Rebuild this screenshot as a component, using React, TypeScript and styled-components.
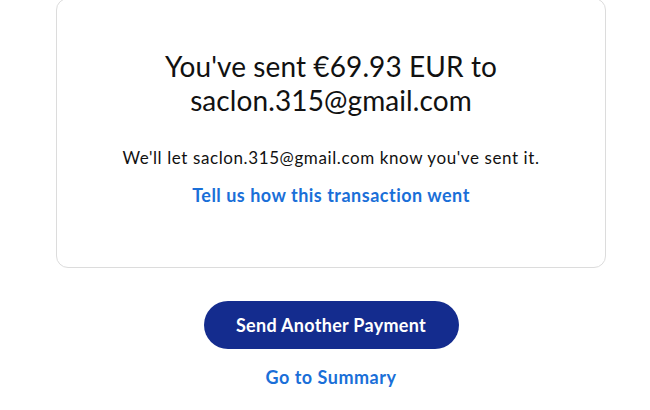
import React from "react";
import styled, { createGlobalStyle } from "styled-components";

const Global = createGlobalStyle`
  html, body { margin: 0; padding: 0; background: #ffffff; }
  body { font-family: Lato, "Open Sans", sans-serif; color: #001435; }
`;

const Page = styled.main`
  width: 650px;
  display: flex;
  flex-direction: column;
  align-items: center;
`;

const Card = styled.section`
  box-sizing: border-box;
  width: 550px;
  height: 270px;
  margin: -2px 0 0 12px;
  border: 1px solid #dcdcdc;
  border-radius: 12px;
  padding: 51px 40px 0;
  display: flex;
  flex-direction: column;
  align-items: center;
  text-align: center;
`;

const Heading = styled.h1`
  margin: 0;
  font-size: 28px;
  line-height: 33.5px;
  font-weight: 400;
  color: #111111;
  width: 380px;
  letter-spacing: 0.1px;
`;

const Sub = styled.p`
  margin: 30px 0 0;
  font-size: 17px;
  line-height: 22px;
  letter-spacing: 0.6px;
  color: #111111;
`;

const Link = styled.a<{ $top: number; $left?: number }>`
  margin-top: ${(p) => p.$top}px;
  margin-left: ${(p) => p.$left ?? 0}px;
  font-size: 18px;
  line-height: 22px;
  font-weight: 700;
  letter-spacing: 0.5px;
  color: #1a6fd8;
  text-decoration: none;
  cursor: pointer;
`;

const Button = styled.button`
  margin: 33px 0 0 12px;
  width: 255px;
  height: 48px;
  border: none;
  border-radius: 24px;
  background: #142c8e;
  color: #ffffff;
  font-family: inherit;
  font-size: 18px;
  font-weight: 700;
  letter-spacing: 0.3px;
  cursor: pointer;
`;

export default function App() {
  return (
    <>
      <Global />
      <Page>
        <Card>
          <Heading>You've sent €69.93 EUR to saclon.315@gmail.com</Heading>
          <Sub>We'll let saclon.315@gmail.com know you've sent it.</Sub>
          <Link $top={15}>Tell us how this transaction went</Link>
        </Card>
        <Button>Send Another Payment</Button>
        <Link $top={17} $left={12}>Go to Summary</Link>
      </Page>
    </>
  );
}
